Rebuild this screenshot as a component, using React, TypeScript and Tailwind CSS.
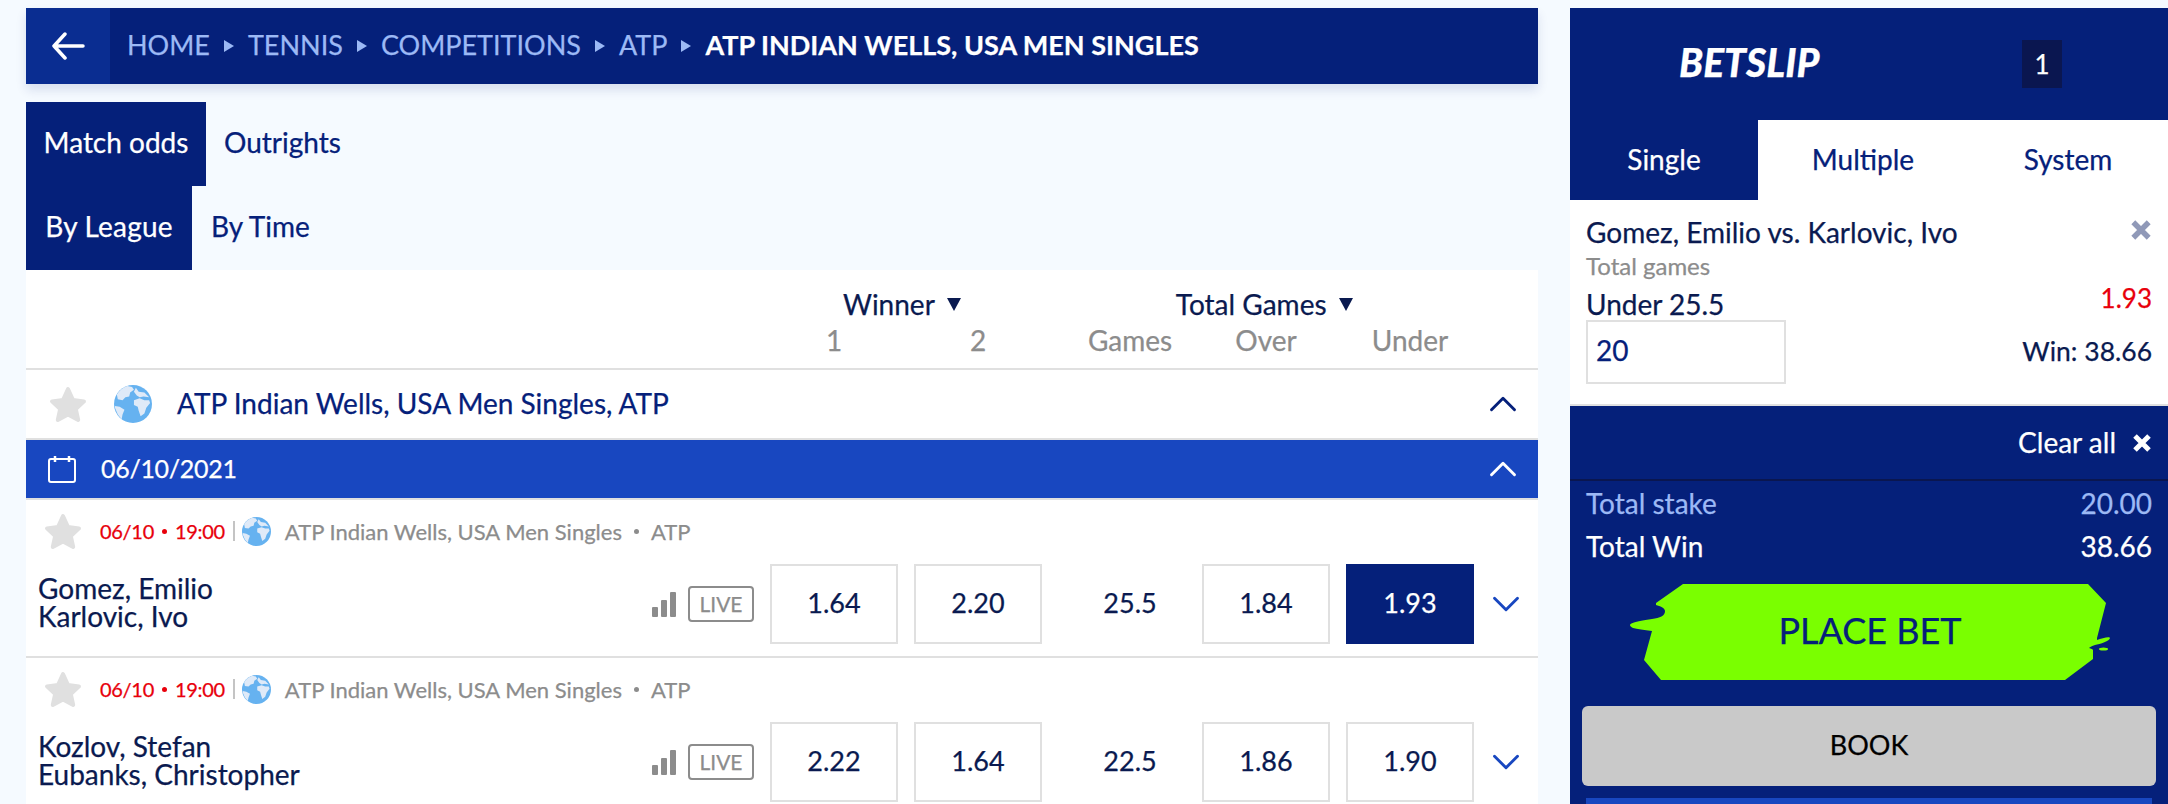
import { ChevronDown, ChevronUp } from "lucide-react"

const font = { fontFamily: '"Lato", "Liberation Sans", sans-serif' }

function Star({ className }: { className: string }) {
  return (
    <svg viewBox="0 0 38 37" className={className}>
      <path
        d="M19 3l5 11 11 1.400-8.200 7.600 2.400 11L19 28.500 8.800 34l2.400-11L3 15.400 14 14z"
        fill="#e0e0e0"
        stroke="#e0e0e0"
        strokeWidth="4"
        strokeLinejoin="round"
      />
    </svg>
  )
}

function Globe({ className }: { className: string }) {
  return (
    <svg viewBox="0 0 40 40" className={className}>
      <circle cx="20" cy="20" r="20" fill="#66b2f0" />
      <path d="M14 1C9 3 5 6 3 10l1 5 5 1 3-3 4-1 1-4 4-3-2-3z" fill="#dfeaf8" />
      <path d="M23 3l3 4 6 1 5 5-6-1-4 1-3-2-3-4z" fill="#dfeaf8" />
      <path d="M21 16l6-2 5 2 5 0 1 3-4 5-2 6-4 3-2-6-1-4-4-2z" fill="#dfeaf8" />
      <path d="M1 22l5 1 5 3-2 5-1 5-4-5-3-7z" fill="#dfeaf8" />
    </svg>
  )
}

function Signal() {
  return (
    <div className="flex items-end gap-[3px] w-[24px] h-[25px]">
      <div className="w-[6px] h-[10px] bg-[#8c8c8c] rounded-[1px]" />
      <div className="w-[6px] h-[17px] bg-[#8c8c8c] rounded-[1px]" />
      <div className="w-[6px] h-[25px] bg-[#8c8c8c] rounded-[1px]" />
    </div>
  )
}

function Triangle({ className }: { className: string }) {
  return (
    <svg viewBox="0 0 12 12" className={className}>
      <path d="M1 0l10 6-10 6z" fill="currentColor" />
    </svg>
  )
}

function DownTriangle() {
  return (
    <svg viewBox="0 0 14 14" className="w-[14px] h-[14px] text-[#0a1a50]">
      <path d="M0 1h14l-7 13z" fill="currentColor" />
    </svg>
  )
}

function BackArrow() {
  return (
    <svg viewBox="0 0 34 28" fill="none" className="w-[34px] h-[28px]">
      <path d="M14 2L3 14l11 12M3 14h29" stroke="#ffffff" strokeWidth="3.5" strokeLinecap="round" strokeLinejoin="round" />
    </svg>
  )
}

function CalendarIcon() {
  return (
    <svg viewBox="0 0 28 28" fill="none" className="w-[28px] h-[28px]">
      <rect x="1" y="4" width="26" height="23" rx="2" stroke="#ffffff" strokeWidth="2" />
      <path d="M7 1v6M21 1v6" stroke="#ffffff" strokeWidth="2.500" />
    </svg>
  )
}

function CloseX({ className }: { className: string }) {
  return (
    <svg viewBox="0 0 20 20" fill="none" className={className}>
      <path d="M3 3l14 14M17 3L3 17" stroke="currentColor" strokeWidth="5" />
    </svg>
  )
}

function OddBox({ value, selected }: { value: string; selected?: boolean }) {
  return (
    <div
      className={
        selected
          ? "w-[128px] h-[80px] pb-[2px] flex items-center justify-center bg-[#05207a] text-white text-[27px]"
          : "w-[128px] h-[80px] pb-[2px] flex items-center justify-center bg-white border-2 border-[#e0e0e0] text-[#0a1a50] text-[27px]"
      }
    >
      {value}
    </div>
  )
}

interface Match {
  home: string
  away: string
  odds: string[]
  games: string
  selected?: boolean
}

const matches: Match[] = [
  { home: "Gomez, Emilio", away: "Karlovic, Ivo", odds: ["1.64", "2.20", "1.84", "1.93"], games: "25.5", selected: true },
  { home: "Kozlov, Stefan", away: "Eubanks, Christopher", odds: ["2.22", "1.64", "1.86", "1.90"], games: "22.5" },
]

function MatchRow({ match }: { match: Match }) {
  return (
    <div className="h-[158px] shrink-0 border-b-[2px] border-[#e0e0e0] bg-white">
      <div className="h-[64px] flex items-center pl-[18px] pb-[2px]">
        <Star className="w-[38px] h-[37px]" />
        <span className="ml-[18px] flex items-center text-[20px] tracking-[-0.3px] text-[#e8000b]">
          06/10
          <span className="mx-[8px] w-[5px] h-[5px] rounded-full bg-[#e8000b]" />
          19:00
        </span>
        <span className="ml-[8px] w-[2px] h-[20px] bg-[#c4c4c4]" />
        <Globe className="ml-[7px] w-[29px] h-[29px]" />
        <span className="ml-[14px] text-[22px] text-[#8c8c8c]">ATP Indian Wells, USA Men Singles</span>
        <span className="mx-[12px] w-[5px] h-[5px] rounded-full bg-[#8c8c8c]" />
        <span className="text-[22px] text-[#8c8c8c]">ATP</span>
      </div>
      <div className="flex items-center">
        <div className="w-[744px] flex items-center pl-[12px] pr-[16px]">
          <div className="flex-1 text-[28px] leading-[28px] pb-[4px] whitespace-pre-line text-[#0a1a50]">
            {`${match.home}\n${match.away}`}
          </div>
          <Signal />
          <div className="ml-[12px] w-[66px] h-[36px] flex items-center justify-center border-2 border-[#8c8c8c] rounded-[4px] text-[21px] text-[#8c8c8c]">
            LIVE
          </div>
        </div>
        <div className="flex gap-4">
          <OddBox value={match.odds[0]} />
          <OddBox value={match.odds[1]} />
          <div className="w-[128px] pl-4 pb-[2px] flex items-center justify-center text-[27px] text-[#0a1a50]">{match.games}</div>
          <OddBox value={match.odds[2]} />
          <OddBox value={match.odds[3]} selected={match.selected} />
        </div>
        <div className="w-[64px] flex justify-center">
          <ChevronDown className="w-[46px] h-[46px] text-[#1847c0]" strokeWidth={1.5} />
        </div>
      </div>
    </div>
  )
}

function Crumb({ label }: { label: string }) {
  return (
    <>
      <span>{label}</span>
      <Triangle className="w-[12px] h-[12px] mx-[13px] mt-[2px]" />
    </>
  )
}

export default function App() {
  return (
    <div
      style={font}
      className="w-[2168px] h-[804px] overflow-hidden bg-[#f5faff] flex pt-2 pl-[26px] [-webkit-text-stroke:0.25px]"
    >
      <div className="w-[1512px] shrink-0">
        <div className="h-[76px] bg-[#05207a] flex items-center shadow-[0_6px_10px_rgba(5,32,122,0.12)]">
          <div className="w-[84px] h-full bg-[#0a2d91] flex items-center justify-center">
            <BackArrow />
          </div>
          <div className="ml-[17px] pb-[2px] flex items-center text-[27px] text-[#9cb9f5]">
            <Crumb label="HOME" />
            <Crumb label="TENNIS" />
            <Crumb label="COMPETITIONS" />
            <Crumb label="ATP" />
            <span className="text-white font-bold">ATP INDIAN WELLS, USA MEN SINGLES</span>
          </div>
        </div>

        <div className="flex mt-[18px] h-[84px] text-[28px]">
          <div className="w-[180px] pb-[4px] flex items-center justify-center bg-[#05207a] text-white">Match odds</div>
          <div className="pl-[18px] pb-[4px] flex items-center text-[#05207a]">Outrights</div>
        </div>
        <div className="flex h-[84px] text-[28px]">
          <div className="w-[166px] pb-[4px] flex items-center justify-center bg-[#05207a] text-white tracking-[0.2px]">By League</div>
          <div className="pl-[19px] pb-[4px] flex items-center text-[#05207a]">By Time</div>
        </div>

        <div className="bg-white">
          <div className="h-[100px] border-b-[2px] border-[#e0e0e0] pt-[16px]">
            <div className="flex text-[28px] text-[#0a1a50] h-[36px] items-center">
              <div className="ml-[817px] flex items-center gap-[12px]">
                Winner <DownTriangle />
              </div>
              <div className="ml-[215px] flex items-center gap-[12px]">
                Total Games <DownTriangle />
              </div>
            </div>
            <div className="flex text-[28px] text-[#8c8c8c] pl-[744px] gap-4 h-[36px] items-center">
              <div className="w-[128px] text-center">1</div>
              <div className="w-[128px] text-center">2</div>
              <div className="w-[128px] pl-4 text-center">Games</div>
              <div className="w-[128px] text-center">Over</div>
              <div className="w-[128px] text-center">Under</div>
            </div>
          </div>

          <div className="h-[68px] flex items-center pl-[23px] pr-[12px]">
            <Star className="w-[38px] h-[37px]" />
            <Globe className="ml-[27px] w-[38px] h-[38px]" />
            <span className="ml-[25px] pb-[2px] text-[28px] text-[#05207a] flex-1">ATP Indian Wells, USA Men Singles, ATP</span>
            <ChevronUp className="w-[46px] h-[46px] text-[#05207a]" strokeWidth={1.5} />
          </div>

          <div className="h-[62px] border-y-[2px] border-[#e0e0e0] bg-[#1847c0] bg-clip-padding flex items-center pl-[22px] pr-[12px] text-white">
            <CalendarIcon />
            <span className="ml-[25px] text-[25px] tracking-[-0.3px] flex-1">06/10/2021</span>
            <ChevronUp className="w-[46px] h-[46px]" strokeWidth={1.5} />
          </div>

          {matches.map((m) => (
            <MatchRow key={m.home} match={m} />
          ))}
        </div>
      </div>

      <div className="ml-[32px] flex-1 min-w-0 flex flex-col">
        <div className="h-[112px] shrink-0 bg-[#05207a] flex items-center text-white">
          <span className="ml-[109px] w-[343px] pb-[4px] text-[39px] font-black italic">BETSLIP</span>
          <div className="w-[40px] h-[48px] bg-[#0a1650] flex items-center justify-center text-[26px]">1</div>
        </div>
        <div className="h-[80px] shrink-0 flex bg-white text-[28px]">
          <div className="w-[188px] pb-[2px] bg-[#05207a] text-white flex items-center justify-center">Single</div>
          <div className="w-[210px] pb-[2px] text-[#05207a] flex items-center justify-center">Multiple</div>
          <div className="flex-1 pb-[2px] text-[#05207a] flex items-center justify-center">System</div>
        </div>
        <div className="h-[206px] shrink-0 bg-white border-b-[2px] border-[#e0e0e0] px-[16px] pt-[15px]">
          <div className="flex justify-between items-center">
            <span className="text-[28px] leading-[34px] text-[#0a1a50]">Gomez, Emilio vs. Karlovic, Ivo</span>
            <CloseX className="w-[22px] h-[22px] text-[#9099b8] -mt-[4px]" />
          </div>
          <div className="text-[24px] leading-[34px] text-[#8c8c8c]">Total games</div>
          <div className="flex justify-between items-start h-[37px]">
            <span className="text-[28px] leading-[42px] text-[#0a1a50]">Under 25.5</span>
            <span className="text-[26px] leading-[30px] text-[#e8000b]">1.93</span>
          </div>
          <div className="flex justify-between items-center">
            <div className="w-[200px] h-[64px] border-2 border-[#e0e0e0] flex items-center pl-[8px] pb-[4px] text-[28px] text-[#05207a]">20</div>
            <span className="text-[26.5px] text-[#0a1a50]">Win: 38.66</span>
          </div>
        </div>
        <div className="flex-1 bg-[#05207a] flex flex-col text-[28px]">
          <div className="h-[75px] shrink-0 border-b-[2px] border-[#0a1650] flex items-center justify-end pr-[16px] text-white">
            <span className="pb-[2px]">Clear all</span>
            <CloseX className="ml-[16px] w-[20px] h-[20px]" />
          </div>
          <div className="flex justify-between px-[16px] h-[44px] items-center text-[#9cb9f5]">
            <span>Total stake</span>
            <span>20.00</span>
          </div>
          <div className="flex justify-between px-[16px] h-[44px] pb-[2px] items-center text-white">
            <span>Total Win</span>
            <span>38.66</span>
          </div>
          <div className="mt-[15px] ml-[60px] w-[480px] h-[96px] relative flex items-center justify-center">
            <svg viewBox="0 0 480 96" className="absolute inset-0 w-full h-full">
              <path
                d="M53 0H458L476 19L467 54L467 56C472 54 480 52 480 54C480 57 470 60 465 61C462 62 460 63 459 64C461 65 463 65 463 66L463 75L435 96H31L14 76L22 47C14 46 7 45 3 44C1 43 0 42 0 41C0 39 8 37 22 35C30 34 35 32 35 27C35 24 30 22 26 21L26 19z"
                fill="#7aff00"
              />
              <ellipse cx="473.500" cy="65" rx="4.500" ry="1.500" fill="#7aff00" />
            </svg>
            <span className="relative pb-[4px] text-[36px] text-[#05207a]">PLACE BET</span>
          </div>
          <div className="mt-[26px] mx-[12px] h-[80px] shrink-0 rounded-[6px] bg-[#c9c9c9] pb-[2px] flex items-center justify-center text-[27px] text-black">BOOK</div>
          <div className="mt-[12px] mx-[16px] h-[20px] shrink-0 bg-[#1847c0]" />
        </div>
      </div>
    </div>
  )
}
